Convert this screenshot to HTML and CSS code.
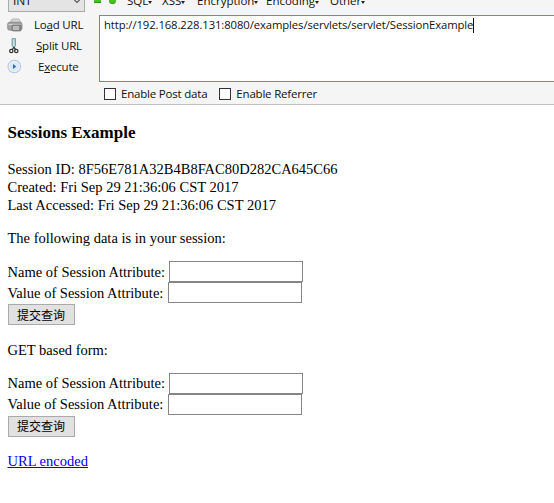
FILE: index.html
```html
<!DOCTYPE html>
<html lang="en">
<head>
<meta charset="utf-8">
<title>Sessions Example</title>
<link rel="stylesheet" href="styles.css">
</head>
<body>
<header class="toolbar">
  <div class="menus">
    <div class="select"><span>INT</span>
      <svg width="8" height="5" viewBox="0 0 8 5"><path d="M1 0.5l3 3 3-3" fill="none" stroke="#555" stroke-width="1.1"/></svg>
    </div>
    <i class="minus"></i><i class="plus"></i>
    <span class="menu sql">SQL<b></b></span>
    <span class="menu xss">XSS<b></b></span>
    <span class="menu encryption">Encryption<b></b></span>
    <span class="menu encoding">Encoding<b></b></span>
    <span class="menu other">Other<b></b></span>
  </div>
  <div class="main">
    <nav class="actions">
      <div class="action">
        <svg width="16" height="16" viewBox="0 0 16 16"><path d="M3 6l2-4h7l2 4z" fill="#d5d5d5" stroke="#aaa" stroke-width=".8"/><rect x=".7" y="5.2" width="14.3" height="8" rx="2" fill="#a3a3a3" stroke="#858585" stroke-width=".8"/><path d="M1.5 7.5h12" stroke="#d0d0d0"/><rect x="5" y="8" width="9" height="6" rx="1" fill="#888" stroke="#777" stroke-width=".7"/><path d="M6 10h6M6 12h6" stroke="#eee"/></svg>
        <span class="load">Lo<u>a</u>d URL</span>
      </div>
      <div class="action">
        <svg width="16" height="16" viewBox="0 0 16 16"><path d="M5 .6q2-1 3.500 0v7L7 10.200 5 7.600z" fill="#9fc5cb" stroke="#6c9299" stroke-width=".8"/><path d="M6.700 1.500v7" stroke="#d7edf0"/><path d="M7 9l-2 3M6.500 9l2.500 3" stroke="#333" stroke-width="1.300"/><circle cx="4.300" cy="13" r="1.700" fill="none" stroke="#333" stroke-width="1.200"/><circle cx="9.300" cy="13" r="1.700" fill="none" stroke="#333" stroke-width="1.200"/></svg>
        <span class="split"><u>S</u>plit URL</span>
      </div>
      <div class="action">
        <svg width="16" height="16" viewBox="0 0 16 16"><circle cx="7.300" cy="7.500" r="6.300" fill="#f0f4fb" stroke="#b7c5e0" stroke-width="1.100"/><circle cx="7.300" cy="7.500" r="4.600" fill="#dce8fa"/><path d="M6 5l3.200 2.500L6 10z" fill="#2868d8"/></svg>
        <span class="exec">E<u>x</u>ecute</span>
      </div>
    </nav>
    <div class="entry">
      <div class="url"><span>http://192.168.228.131:8080/examples/servlets/servlet/SessionExample</span><i class="caret"></i></div>
      <div class="options">
        <label class="post"><i class="box"></i><span>Enable Post data</span></label>
        <label class="ref"><i class="box"></i><span>Enable Referrer</span></label>
      </div>
    </div>
  </div>
</header>
<main class="page">
  <h3>Sessions Example</h3>
  <div class="info"><div>Session ID: 8F56E781A32B4B8FAC80D282CA645C66</div><div>Created: Fri Sep 29 21:36:06 CST 2017</div><div>Last Accessed: Fri Sep 29 21:36:06 CST 2017</div></div>
  <p>The following data is in your session:</p>
  <form>
    <div class="field"><label>Name of Session Attribute:</label><input type="text"></div>
    <div class="field"><label>Value of Session Attribute:</label><input type="text"></div>
    <button type="button">提交查询</button>
  </form>
  <p>GET based form:</p>
  <form>
    <div class="field"><label>Name of Session Attribute:</label><input type="text"></div>
    <div class="field"><label>Value of Session Attribute:</label><input type="text"></div>
    <button type="button">提交查询</button>
  </form>
  <a class="link" href="#">URL encoded</a>
</main>
</body>
</html>
```
FILE: styles.css
```css
* { box-sizing: border-box; }
body { margin: 0; background: #fff; color: #000; font: 14.5px/18px "Liberation Serif", serif; }
.toolbar { height: 105px; overflow: hidden; background: #f5f5f5; border-bottom: 1px solid #c3c3c3; font: 11.5px/16px "Open Sans", sans-serif; letter-spacing: -0.2px; color: #111; }
.menus { display: flex; height: 15px; position: relative; }
.select { display: flex; width: 77px; height: 12px; margin-left: 8px; padding: 0 5px 0 4px; overflow: hidden; justify-content: space-between; background: #e4e4e4; border: 1px solid #aaa; border-top: 0; }
.select span { margin-top: -7px; font-size: 12px; }
.select svg { margin: -1px -2px 0 0; }
.minus { width: 7px; height: 3px; margin-left: 9px; background: #42c51c; border-bottom: 1px solid #289711; }
.plus { width: 7px; height: 4px; margin-left: 8px; background: #42c51c; border-bottom: 1px solid #289711; border-radius: 0 0 4px 4px; }
.menu { position: absolute; top: -7px; display: flex; align-items: center; letter-spacing: 0; }
.menu b { border: 2.5px solid transparent; border-top: 3px solid #222; border-bottom: 0; margin-top: 2px; }
.sql { left: 127px; }
.xss { left: 162px; }
.encryption { left: 197px; }
.encoding { left: 266px; }
.other { left: 330px; }
.main { display: flex; }
.actions { width: 99px; flex: none; margin-top: -1px; }
.action { display: flex; height: 21.3px; padding-left: 7px; align-items: center; }
.action svg { flex: none; }
.action span { margin-left: 11px; white-space: nowrap; }
.action .split { margin-left: 13px; }
.action .exec { margin-left: 15px; }
.entry { flex: 1; min-width: 0; }
.url { display: flex; height: 67px; margin-right: -2px; padding: 1px 0 0 4px; background: #fff; border: 1px solid #3f98d8; }
.url span { font-size: 11.3px; letter-spacing: -0.1px; white-space: nowrap; }
.caret { width: 1px; height: 15px; margin-top: 1px; background: #111; }
.options { display: flex; padding: 4px 0 0 5px; gap: 12px; }
.options label { display: flex; align-items: center; }
.box { width: 12px; height: 12px; margin-right: 5px; background: #fff; border: 1px solid #333; }
.page { padding: 18px 7.5px 0; }
h3 { margin: 0 0 18px; font-size: 17px; line-height: 19px; }
.info { height: 54px; }
.page p { margin: 15px 0 14px; line-height: 18px; }
form { height: 64.5px; }
.field { display: flex; height: 21px; align-items: center; }
input { width: 134px; height: 21px; margin: 0 0 0 4.3px; padding: 1px; border: 1px solid #858585; background: #fff; }
button { display: block; width: 67px; height: 21px; margin: 1px 0 0; padding: 0; border: 1px solid #aaa; border-radius: 0; background: #e1e1e1; color: #000; font: 12px/18px "Noto Sans CJK SC", sans-serif; }
.link { display: inline-block; margin-top: 15px; color: #0000ee; }
```
